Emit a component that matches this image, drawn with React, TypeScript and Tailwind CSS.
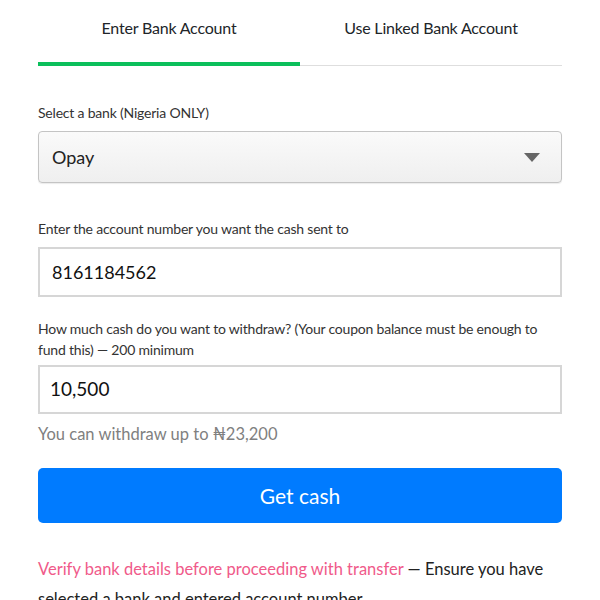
import { useState } from "react";

export default function App() {
  const [tab, setTab] = useState(0);
  return (
    <div className="min-h-[600px] bg-white px-[38px] text-[#212529] font-['Lato','Noto_Sans',sans-serif]">
      {/* Tabs */}
      <div className="flex border-b border-[#dedede]">
        <button
          onClick={() => setTab(0)}
          className={`w-1/2 pt-[16px] pb-[22px] text-[16px] tracking-[-0.2px] border-b-4 -mb-px ${tab === 0 ? "border-[#0bbf5b]" : "border-transparent"}`}
        >
          Enter Bank Account
        </button>
        <button
          onClick={() => setTab(1)}
          className={`w-1/2 pt-[16px] pb-[22px] text-[16px] tracking-[-0.2px] border-b-4 -mb-px ${tab === 1 ? "border-[#0bbf5b]" : "border-transparent"}`}
        >
          Use Linked Bank Account
        </button>
      </div>

      {/* Bank select */}
      <div className="mt-[36px] text-[14px] tracking-[-0.2px] text-[#333] leading-[21px]">Select a bank (Nigeria ONLY)</div>
      <div className="mt-[8px] h-[52px] flex items-center justify-between rounded-[4px] border border-[#c4c4c4] bg-gradient-to-b from-[#fafafa] to-[#efefef] px-[13px] shadow-[0_1px_1px_rgba(0,0,0,0.08)]">
        <span className="text-[18px] text-[#222]">Opay</span>
        <svg width="16" height="9" viewBox="0 0 16 9" className="mr-[8px]">
          <path d="M0 0 H16 L8 9 Z" fill="#666" />
        </svg>
      </div>

      {/* Account number */}
      <div className="mt-[35px] text-[14px] tracking-[-0.2px] text-[#333] leading-[21px]">Enter the account number you want the cash sent to</div>
      <div className="mt-[8px] h-[50px] flex items-center border-2 border-[#d6d6d6] px-[12px]">
        <span className="text-[18px] text-[#111]">8161184562</span>
      </div>

      {/* Amount */}
      <div className="mt-[21px] text-[14px] tracking-[-0.2px] text-[#333] leading-[21px]">
        How much cash do you want to withdraw? (Your coupon balance must be enough to fund this) — 200 minimum
      </div>
      <div className="mt-[5px] h-[49px] flex items-center border-2 border-[#d6d6d6] px-[10px]">
        <span className="text-[19px] text-[#111]">10,500</span>
      </div>
      <div className="mt-[8px] text-[16.5px] text-[#808080] leading-[24px]">You can withdraw up to ₦23,200</div>

      {/* Button */}
      <button className="mt-[22px] w-full h-[55px] rounded-[5px] bg-[#007bff] text-white text-[21px]">Get cash</button>

      {/* Note */}
      <p className="mt-[31px] text-[16.5px] leading-[30px] text-[#222]">
        <span className="text-[#f05a8a]">Verify bank details before proceeding with transfer</span> — Ensure you have
        selected a bank and entered account number
      </p>
    </div>
  );
}
